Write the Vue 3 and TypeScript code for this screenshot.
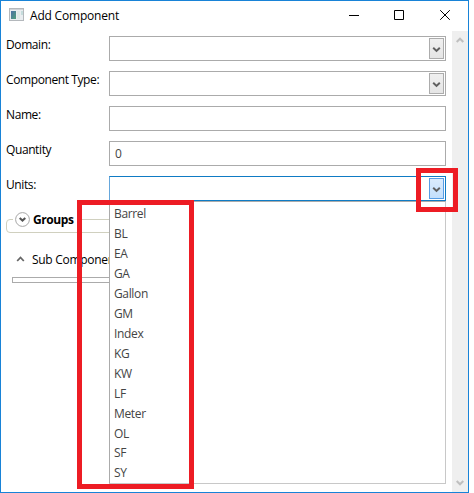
<script setup lang="ts">
interface Field {
  label: string
  value: string
  combo: boolean
  open: boolean
}

const fields: Field[] = [
  { label: 'Domain:', value: '', combo: true, open: false },
  { label: 'Component Type:', value: '', combo: true, open: false },
  { label: 'Name:', value: '', combo: false, open: false },
  { label: 'Quantity', value: '0', combo: false, open: false },
  { label: 'Units:', value: '', combo: true, open: true },
]

const units: string[] = [
  'Barrel', 'BL', 'EA', 'GA', 'Gallon', 'GM', 'Index',
  'KG', 'KW', 'LF', 'Meter', 'OL', 'SF', 'SY',
]
</script>

<template>
  <div class="window">
    <header class="titlebar">
      <svg class="app-icon" width="16" height="14" viewBox="0 0 16 14">
        <defs>
          <linearGradient id="pane" x1="0" y1="0" x2="1" y2="1">
            <stop offset="0" stop-color="#4c6fa5" />
            <stop offset="1" stop-color="#4fa07a" />
          </linearGradient>
        </defs>
        <rect x="0.5" y="0.5" width="14" height="12" fill="#e9edf0" stroke="#b4b8bc" />
        <rect x="1" y="1" width="13" height="1" fill="#cfd3d7" />
        <rect x="2" y="3" width="5" height="8" fill="url(#pane)" />
        <rect x="8" y="3" width="3" height="8" fill="#dfe8e6" />
        <rect x="12" y="3" width="2" height="4" fill="#c5dcdc" />
      </svg>
      <span class="title">Add Component</span>
      <svg class="controls" width="104" height="12" viewBox="0 0 104 12">
        <path d="M1 6.5H11M46.5 1.5h9v9h-9zM92.2 1.2l9.6 9.6M101.8 1.2l-9.6 9.6" fill="none" stroke="#000" />
      </svg>
    </header>

    <div class="body">
      <main class="content">
        <div v-for="f in fields" :key="f.label" class="row">
          <label class="label">{{ f.label }}</label>
          <div class="input" :class="{ open: f.open }">
            <span class="value">{{ f.value }}</span>
            <span v-if="f.combo" class="drop">
              <svg width="9" height="7" viewBox="0 0 9 7">
                <path d="M1.2 1.8L4.5 4.9L7.8 1.8" fill="none" stroke="#606060" stroke-width="2" />
              </svg>
            </span>
          </div>
        </div>

        <section class="groups">
          <div class="groups-head">
            <svg width="15" height="15" viewBox="0 0 15 15">
              <circle cx="7.5" cy="7.5" r="6.9" fill="#fff" stroke="#a6a6a6" />
              <path d="M4.7 6L7.5 8.6L10.3 6" fill="none" stroke="#555" stroke-width="2" />
            </svg>
            <span>Groups</span>
          </div>
        </section>

        <div class="sub">
          <svg width="9" height="7" viewBox="0 0 9 7">
            <path d="M1.2 5L4.5 1.5L7.8 5" fill="none" stroke="#666" stroke-width="1.8" />
          </svg>
          <span>Sub Components</span>
        </div>
        <div class="table"></div>
      </main>

      <aside class="scrollbar">
        <svg width="8" height="6" viewBox="0 0 8 6">
          <path d="M.7 5L4 1.7L7.3 5" fill="none" stroke="#bfbfbf" stroke-width="2" />
        </svg>
        <svg width="8" height="6" viewBox="0 0 8 6">
          <path d="M.7 1L4 4.3L7.3 1" fill="none" stroke="#bfbfbf" stroke-width="2" />
        </svg>
      </aside>
    </div>

    <ul class="menu">
      <li v-for="u in units" :key="u">{{ u }}</li>
    </ul>
    <div class="mark mark-list"></div>
    <div class="mark mark-button"></div>
  </div>
</template>

<style>
body {
  background: #fff;
  overflow: hidden;
}
</style>

<style scoped>
.window {
  position: relative;
  box-sizing: border-box;
  width: 469px;
  height: 493px;
  border: 1px solid #1883d7;
  background: #fff;
  color: #000;
  font-family: "Open Sans", "Noto Sans", sans-serif;
  font-size: 12px;
  line-height: 16px;
  display: flex;
  flex-direction: column;
}
.titlebar {
  height: 30px;
  flex: none;
  display: flex;
  align-items: center;
  padding: 0 16px 2px 8px;
  box-sizing: border-box;
}
.app-icon {
  flex: none;
}
.title {
  margin-left: 5px;
  padding-top: 2px;
  flex: 1;
  letter-spacing: -0.2px;
}
.body {
  flex: 1;
  display: flex;
}
.content {
  flex: 1;
  padding: 5px 6px 0 5px;
}
.row {
  display: flex;
  height: 25px;
  margin-bottom: 10px;
}
.label {
  width: 103px;
  padding-top: 1px;
  flex: none;
  white-space: nowrap;
  letter-spacing: -0.4px;
}
.input {
  flex: 1;
  box-sizing: border-box;
  border: 1px solid #ababab;
  display: flex;
  align-items: center;
  padding: 0 1px 0 5px;
}
.value {
  flex: 1;
  color: #444;
}
.open {
  border-color: #0f7bc4;
  border-left-color: #66a7dc;
}
.drop {
  box-sizing: border-box;
  width: 15px;
  height: 21px;
  padding-top: 2px;
  border: 1px solid #acacac;
  background: linear-gradient(#f0f0f0, #e5e5e5);
  display: flex;
  align-items: center;
  justify-content: center;
}
.open .drop {
  border-color: #569de5;
  background: linear-gradient(#dbebfc, #c4e0fc);
}
.groups {
  box-sizing: border-box;
  height: 14px;
  margin-top: 18px;
  border: 1px solid #d0d0bf;
  border-radius: 4px;
}
.groups-head {
  display: flex;
  align-items: center;
  width: 69px;
  height: 16px;
  margin: -9px 0 0 6px;
  padding-left: 2px;
  box-sizing: border-box;
  background: #fff;
  font-weight: 700;
}
.groups-head span {
  margin-left: 3px;
  padding-top: 2px;
  letter-spacing: -0.4px;
}
.sub {
  display: flex;
  align-items: center;
  height: 16px;
  margin: 18px 0 0 10px;
}
.sub span {
  margin-left: 7px;
  padding-top: 2px;
  white-space: nowrap;
  letter-spacing: -0.3px;
}
.table {
  box-sizing: border-box;
  height: 6px;
  margin: 10px 0 0 6px;
  border: 1px solid #ababab;
}
.scrollbar {
  width: 16px;
  background: #efefef;
  display: flex;
  flex-direction: column;
  align-items: center;
  justify-content: space-between;
  padding: 6px 0;
  box-sizing: border-box;
}
.menu {
  position: absolute;
  left: 108px;
  top: 200px;
  width: 337px;
  height: 283px;
  box-sizing: border-box;
  margin: 0;
  padding: 2.2px 4px 0;
  list-style: none;
  border: 1px solid #ababab;
  border-right-color: #c8c8c8;
  border-bottom-color: #c8c8c8;
  background: #fff;
  color: #444;
  letter-spacing: -0.35px;
}
.menu li {
  height: 19.95px;
  line-height: 20px;
}
.mark {
  position: absolute;
  box-sizing: border-box;
  border: 5px solid #ed1c24;
}
.mark-list {
  left: 76px;
  top: 199px;
  width: 117px;
  height: 289px;
}
.mark-button {
  left: 415px;
  top: 167px;
  width: 42px;
  height: 44px;
}
</style>
